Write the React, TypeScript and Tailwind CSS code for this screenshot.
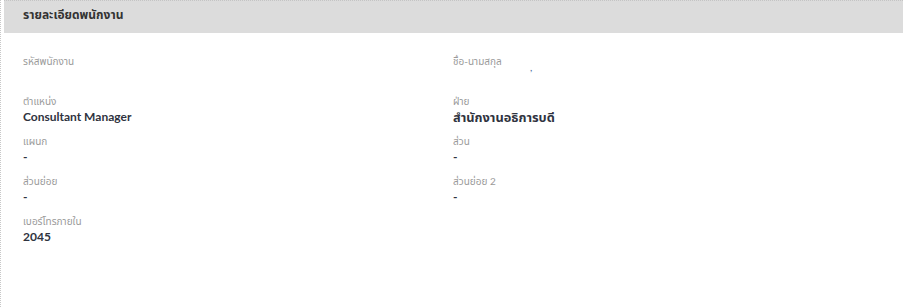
import React from "react";

const font = { fontFamily: 'Lato, "Noto Sans Thai", Tahoma, sans-serif' };

function Field({ label, value, thai }: { label: string; value?: string; thai?: boolean }) {
  return (
    <div className="flex flex-col h-[40px]">
      <div className="text-[10px] leading-[14px] text-[#9a9a9a]">{label}</div>
      <div
        className={
          thai
            ? "text-[12.8px] leading-[18px] font-bold text-[#2f3340] min-h-[18px]"
            : "text-[12px] leading-[18px] font-bold text-[#2f3340] min-h-[18px]"
        }
      >
        {value ?? ""}
      </div>
    </div>
  );
}

export default function App() {
  return (
    <div className="w-[903px] h-[307px] bg-white border-l border-dotted border-[#c8c8c8] pl-[3px] overflow-hidden" style={font}>
      <div className="h-[33px] bg-[#dcdcdc] border-t border-dotted border-[#c4c4c4] flex items-start pt-[5px] pl-[19px]">
        <span className="text-[12px] leading-[18px] font-bold text-[#333]">รายละเอียดพนักงาน</span>
      </div>
      <div className="grid grid-cols-[430px_1fr] pl-[19px] pt-[21px]">
        <Field label="รหัสพนักงาน" />
        <div className="relative">
          <Field label="ชื่อ-นามสกุล" />
          <span className="absolute left-[77px] top-[6px] text-[10px] text-[#4a6a9a]">,</span>
        </div>
        <Field label="ตำแหน่ง" value="Consultant Manager" />
        <Field label="ฝ่าย" value="สำนักงานอธิการบดี" thai />
        <Field label="แผนก" value="-" />
        <Field label="ส่วน" value="-" />
        <Field label="ส่วนย่อย" value="-" />
        <Field label="ส่วนย่อย 2" value="-" />
        <Field label="เบอร์โทรภายใน" value="2045" />
      </div>
    </div>
  );
}
